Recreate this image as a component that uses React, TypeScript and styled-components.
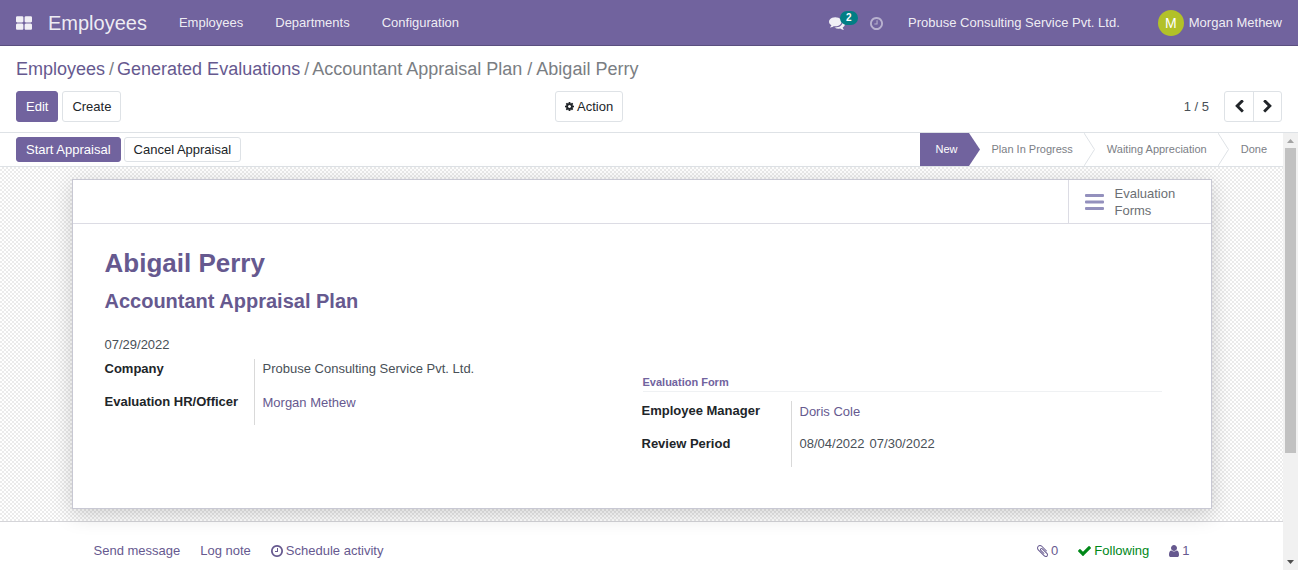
import React from "react";
import styled, { createGlobalStyle } from "styled-components";

const GlobalStyle = createGlobalStyle`
  *, *::before, *::after { box-sizing: border-box; }
  body {
    margin: 0;
    background: #fff;
    color: #495057;
    font-family: "Liberation Sans", Arial, sans-serif;
    font-size: 13px;
    line-height: 20px;
  }
  a { text-decoration: none; }
  h1, h2, h3, p, dl, dd, ol { margin: 0; padding: 0; }
`;

const purple = "#71639e";
const linkColor = "#66598f";
const line = "#dee2e6";

/* Each icon: its view box and its outline. */
const icons = {
  grid: [
    "64 128 1664 1408",
    "M832 1024v384q0 52-38 90t-90 38h-512q-52 0-90-38t-38-90v-384q0-52 38-90t90-38h512q52 0 90 38t38 90zm0-768v384q0 52-38 90t-90 38h-512q-52 0-90-38t-38-90v-384q0-52 38-90t90-38h512q52 0 90 38t38 90zm896 768v384q0 52-38 90t-90 38h-512q-52 0-90-38t-38-90v-384q0-52 38-90t90-38h512q52 0 90 38t38 90zm0-768v384q0 52-38 90t-90 38h-512q-52 0-90-38t-38-90v-384q0-52 38-90t90-38h512q52 0 90 38t38 90z",
  ],
  comments: [
    "0 256 1792 1408",
    "M1408 768q0 139-94 257t-256.500 186.500-353.500 68.500q-86 0-176-16-124 88-278 128-36 9-86 16h-3q-11 0-20.500-8t-11.500-21q-1-3-1-6.500t.5-6.500 2-6l2.500-5 3.500-5.500 4-5 4.500-5 4-4.500q5-6 23-25t26-29.500 22.500-29 25-38.500 20.500-44q-124-72-195-177t-71-224q0-139 94-257t256.500-186.500 353.500-68.500 353.500 68.500 256.500 186.500 94 257zm384 256q0 120-71 224.500t-195 176.500q10 24 20.500 44t25 38.500 22.500 29 26 29.500 23 25q1 1 4 4.500t4.500 5 4 5 3.500 5.500l2.500 5 2 6 .5 6.500-1 6.500q-3 14-13 22t-22 7q-50-7-86-16-154-40-278-128-90 16-176 16-271 0-472-132 58 4 88 4 161 0 309-45t264-129q125-92 192-212t67-254q0-77-23-152 129 71 204 178t75 230z",
  ],
  clock: [
    "128 128 1536 1536",
    "M1024 544v448q0 14-9 23t-23 9h-320q-14 0-23-9t-9-23v-64q0-14 9-23t23-9h224v-352q0-14 9-23t23-9h64q14 0 23 9t9 23zm416 352q0-148-73-273t-198-198-273-73-273 73-198 198-73 273 73 273 198 198 273 73 273-73 198-198 73-273zm224 0q0 209-103 385.500t-279.500 279.500-385.500 103-385.500-103-279.500-279.500-103-385.500 103-385.500 279.500-279.500 385.500-103 385.500 103 279.500 279.500 103 385.500z",
  ],
  cog: [
    "128 128 1536 1536",
    "M1152 896q0-106-75-181t-181-75-181 75-75 181 75 181 181 75 181-75 75-181zm512-109v222q0 12-8 23t-20 13l-185 28q-19 54-39 91 35 50 107 138 10 12 10 25t-9 23q-27 37-99 108t-94 71q-12 0-26-9l-138-108q-44 23-91 38-16 136-29 186-7 28-36 28h-222q-14 0-24.500-8.500t-11.500-21.500l-28-184q-49-16-90-37l-141 107q-10 9-25 9-14 0-25-11-126-114-165-168-7-10-7-23 0-12 8-23 15-21 51-66.500t54-70.500q-27-50-41-99l-183-27q-13-2-21-12.500t-8-23.500v-222q0-12 8-23t19-13l186-28q14-46 39-92-40-57-107-138-10-12-10-24 0-10 9-23 26-36 98.500-107.500t94.500-71.500q13 0 26 10l138 107q44-23 91-38 16-136 29-186 7-28 36-28h222q14 0 24.500 8.500t11.500 21.500l28 184q49 16 90 37l142-107q9-9 24-9 13 0 25 10 129 119 165 170 7 8 7 22 0 12-8 23-15 21-51 66.500t-54 70.500q26 50 41 98l183 28q13 2 21 12.500t8 23.500z",
  ],
  left: [
    "410 90 1036 1612",
    "M1427 301l-531 531 531 531q19 19 19 45t-19 45l-166 166q-19 19-45 19t-45-19l-742-742q-19-19-19-45t19-45l742-742q19-19 45-19t45 19l166 166q19 19 19 45t-19 45z",
  ],
  right: [
    "346 90 1036 1612",
    "M1363 877l-742 742q-19 19-45 19t-45-19l-166-166q-19-19-19-45t19-45l531-531-531-531q-19-19-19-45t19-45l166-166q19-19 45-19t45 19l742 742q19 19 19 45t-19 45z",
  ],
  bars: [
    "0 0 19 16",
    "M1 0H18a1 1 0 0 1 1 1V2a1 1 0 0 1-1 1H1a1 1 0 0 1-1-1V1a1 1 0 0 1 1-1zM1 6.500H18a1 1 0 0 1 1 1v1a1 1 0 0 1-1 1H1a1 1 0 0 1-1-1v-1a1 1 0 0 1 1-1zM1 13H18a1 1 0 0 1 1 1v1a1 1 0 0 1-1 1H1a1 1 0 0 1-1-1v-1a1 1 0 0 1 1-1z",
  ],
  check: [
    "121 334 1550 1188",
    "M1671 566q0 40-28 68l-724 724-136 136q-28 28-68 28t-68-28l-136-136-362-362q-28-28-28-68t28-68l136-136q28-28 68-28t68 28l294 295 656-657q28-28 68-28t68 28l136 136q28 28 28 68z",
  ],
  user: [
    "256 128 1280 1536",
    "M1536 1399q0 109-62.500 187t-150.500 78h-854q-88 0-150.500-78t-62.500-187q0-85 8.500-160.500t31.500-152 58.500-131 94-89 134.500-34.500q131 128 313 128t313-128q76 0 134.500 34.500t94 89 58.500 131 31.500 152 8.500 160.500zm-256-887q0 159-112.500 271.500t-271.500 112.500-271.500-112.500-112.500-271.500 112.500-271.500 271.500-112.500 271.500 112.500 112.500 271.500z",
  ],
  clip: [
    "192 128 1404 1532",
    "M1596 1385q0 117-79 196t-196 79q-135 0-235-100l-777-776q-113-115-113-271 0-159 110-270t269-111q158 0 273 113l605 606q10 10 10 22 0 16-30.500 46.500t-46.500 30.500q-13 0-23-10l-606-607q-79-77-181-77-106 0-179 75t-73 181q0 105 76 181l776 777q63 63 145 63 64 0 106-42t42-106q0-82-63-145l-581-581q-26-24-60-24-29 0-48 19t-19 48q0 32 25 59l410 410q10 10 10 22 0 16-31 47t-47 31q-12 0-22-10l-410-410q-63-61-63-149 0-82 57-139t139-57q88 0 149 63l581 581q100 98 100 235z",
  ],
};

const IconSvg = styled.svg<{ $width: number; $height: number }>`
  display: block;
  flex: none;
  width: ${(p) => p.$width}px;
  height: ${(p) => p.$height}px;
  fill: currentColor;
`;

interface IconProps {
  name: keyof typeof icons;
  width: number;
  height: number;
}

function Icon({ name, width, height }: IconProps) {
  const [viewBox, path] = icons[name];
  return (
    <IconSvg $width={width} $height={height} viewBox={viewBox} aria-hidden="true">
      <path d={path} />
    </IconSvg>
  );
}

const Page = styled.div`
  display: flex;
  flex-direction: column;
  height: 100vh;
  overflow: hidden;
`;

/* Top navigation */

const NavBar = styled.header`
  display: flex;
  align-items: center;
  flex: none;
  height: 46px;
  padding: 0 16px;
  background: ${purple};
  border-bottom: 1px solid #5a4f7f;
  color: rgba(255, 255, 255, 0.9);
`;

const NavButton = styled.button<{ $dim?: boolean }>`
  position: relative;
  display: flex;
  padding: 1px 0 0;
  border: 0;
  background: none;
  color: ${(p) => (p.$dim ? "rgba(255, 255, 255, 0.5)" : "rgba(255, 255, 255, 0.9)")};
`;

const Brand = styled.a`
  margin: 0 32px 0 16px;
  color: inherit;
  font-size: 20px;
`;

const Menu = styled.nav`
  display: flex;
  flex: 1;
  gap: 32px;
`;

const MenuLink = styled.a`
  color: inherit;
`;

const Tray = styled.div`
  display: flex;
  align-items: center;
`;

const TrayIcons = styled.div`
  display: flex;
  align-items: center;
  gap: 25px;
  margin-right: 25px;
`;

const Badge = styled.span`
  position: absolute;
  left: 11px;
  top: -5px;
  padding: 0 6px;
  border-radius: 8px;
  background: #017e84;
  color: #fff;
  font: bold 10px/14px "Liberation Sans", Arial, sans-serif;
`;

const UserLink = styled.a`
  display: flex;
  align-items: center;
  gap: 5px;
  margin-left: 38px;
  color: inherit;
`;

const Avatar = styled.span`
  width: 26px;
  height: 26px;
  border-radius: 50%;
  background: #b2c128;
  color: #fff;
  font-size: 14px;
  line-height: 26px;
  text-align: center;
`;

/* Control panel */

const ControlPanel = styled.section`
  flex: none;
  padding: 10px 16px;
  border-bottom: 1px solid ${line};
`;

const Breadcrumb = styled.nav`
  display: flex;
  color: #7a7e83;
  font-size: 18px;
  line-height: 26px;
`;

const Crumb = styled.a`
  color: ${linkColor};
`;

const Slash = styled.span`
  margin: 0 3px 0 4px;
`;

const PanelRow = styled.div`
  display: grid;
  grid-template-columns: 9fr auto 11fr;
  align-items: center;
  margin-top: 9px;
`;

const ButtonGroup = styled.div<{ $gap: number }>`
  display: flex;
  gap: ${(p) => p.$gap}px;
`;

const Button = styled.button<{ $primary?: boolean; $small?: boolean }>`
  display: flex;
  align-items: center;
  gap: 3px;
  height: ${(p) => (p.$small ? 25 : 31)}px;
  padding: 0 9px;
  border: 1px solid ${(p) => (p.$primary ? purple : line)};
  border-radius: 3px;
  background: ${(p) => (p.$primary ? purple : "#fff")};
  color: ${(p) => (p.$primary ? "#fff" : "#212529")};
  font: 13px/20px "Liberation Sans", Arial, sans-serif;
`;

const Pager = styled.div`
  display: flex;
  align-items: center;
  justify-content: flex-end;
  gap: 15px;
`;

const PagerButtons = styled.div`
  display: flex;
  border: 1px solid ${line};
  border-radius: 3px;
`;

const PagerButton = styled.button`
  display: flex;
  align-items: center;
  justify-content: center;
  width: 28px;
  height: 29px;
  padding: 0;
  border: 0;
  background: none;
  color: #212529;

  & + & {
    border-left: 1px solid ${line};
  }
`;

/* Scrolling content */

const Content = styled.div`
  display: flex;
  flex: 1;
  min-height: 0;
`;

const Main = styled.main`
  flex: 1;
  min-width: 0;
  overflow: hidden;
`;

const ScrollTrack = styled.div`
  display: flex;
  flex: none;
  flex-direction: column;
  align-items: center;
  width: 15px;
  background: #f1f1f1;
`;

const ScrollArrow = styled.svg`
  display: block;
  flex: none;
  width: 15px;
  height: 15px;
`;

const ScrollRoom = styled.div`
  flex: 1;
  width: 11px;
`;

const ScrollThumb = styled.div`
  height: 75%;
  background: #c1c1c1;
`;

const StatusBar = styled.div`
  display: flex;
  align-items: center;
  justify-content: space-between;
  height: 34px;
  padding-left: 16px;
  border-bottom: 1px solid ${line};
`;

const Steps = styled.ol`
  display: flex;
  height: 33px;
  list-style: none;
`;

const Step = styled.li<{ $active?: boolean }>`
  display: flex;
  align-items: center;
  padding-left: ${(p) => (p.$active ? 15 : 12)}px;
  background: ${(p) => (p.$active ? purple : "transparent")};
  color: ${(p) => (p.$active ? "#fff" : "#7c8086")};
  font-size: 11px;

  &:last-child {
    padding-right: 16px;
  }
`;

const StepLabel = styled.span`
  padding-bottom: 2px;
`;

const StepArrow = styled.svg<{ $active?: boolean }>`
  display: block;
  width: 11px;
  height: 33px;
  margin-left: 11px;
  background: #fff;
  fill: ${(p) => (p.$active ? purple : "none")};
  stroke: ${(p) => (p.$active ? "none" : line)};
`;

const SheetArea = styled.div`
  padding: 12px 16px;
  border-bottom: 1px solid #d5d5d9;
  background: repeating-conic-gradient(#ebebeb 0 25%, #fff 0 50%) 0 0 / 4px 4px;
`;

const Sheet = styled.article`
  max-width: 1140px;
  min-height: 330px;
  margin: 0 auto;
  border: 1px solid #c8c8d3;
  background: #fff;
  box-shadow: 0 5px 20px rgba(0, 0, 0, 0.18);
`;

const StatRow = styled.div`
  display: flex;
  justify-content: flex-end;
  border-bottom: 1px solid #dcdce4;
`;

const StatButton = styled.button`
  display: flex;
  align-items: center;
  gap: 11px;
  width: 143px;
  height: 43px;
  padding: 0 16px;
  border: 0;
  border-left: 1px solid #dcdce4;
  background: none;
  color: #6c6f74;
  font: 13px/17px "Liberation Sans", Arial, sans-serif;
  text-align: left;
`;

const StatIcon = styled.span`
  color: #9390bd;
`;

const SheetBody = styled.div`
  padding: 24px 32px;
`;

const Title = styled.h1`
  color: ${linkColor};
  font-size: 26px;
  line-height: 30px;
`;

const Subtitle = styled.h2`
  margin-top: 11px;
  color: ${linkColor};
  font-size: 20px;
  line-height: 24px;
`;

const DateText = styled.p`
  margin-top: 22px;
`;

const Columns = styled.div`
  display: grid;
  grid-template-columns: 1fr 1fr;
  margin-top: 4px;
`;

const Column = styled.section`
  padding-right: 16px;
`;

const GroupTitle = styled.h3`
  margin: 15px 1px 9px;
  border-bottom: 1px solid #eff1f3;
  color: ${purple};
  font-size: 11px;
  line-height: 17px;
`;

const Fields = styled.dl`
  display: grid;
  grid-template-columns: 150px 1fr;
`;

const FieldName = styled.dt`
  height: 33px;
  border-right: 1px solid #d9d9d9;
  color: #212529;
  font-weight: bold;
`;

const FieldValue = styled.dd`
  display: flex;
  gap: 5px;
  height: 33px;
  padding-left: 8px;
`;

const RecordLink = styled.a`
  padding-top: 1px;
  color: ${linkColor};
`;

/* Chatter */

const Chatter = styled.footer`
  display: flex;
  justify-content: space-between;
  max-width: 1096px;
  margin: 0 auto;
  padding: 19px 0;
`;

const ChatterGroup = styled.div`
  display: flex;
  gap: 20px;
`;

const ChatterButton = styled.button<{ $green?: boolean }>`
  display: flex;
  align-items: center;
  gap: 3px;
  padding: 0;
  border: 0;
  background: none;
  color: ${(p) => (p.$green ? "#008818" : linkColor)};
  font: 13px/20px "Liberation Sans", Arial, sans-serif;
`;

const steps = ["New", "Plan In Progress", "Waiting Appreciation", "Done"];

export default function App() {
  return (
    <Page>
      <GlobalStyle />
      <NavBar>
        <NavButton aria-label="Apps">
          <Icon name="grid" width={16} height={14} />
        </NavButton>
        <Brand href="#">Employees</Brand>
        <Menu>
          <MenuLink href="#">Employees</MenuLink>
          <MenuLink href="#">Departments</MenuLink>
          <MenuLink href="#">Configuration</MenuLink>
        </Menu>
        <Tray>
          <TrayIcons>
            <NavButton aria-label="Messages">
              <Icon name="comments" width={16} height={13} />
              <Badge>2</Badge>
            </NavButton>
            <NavButton $dim aria-label="Activities">
              <Icon name="clock" width={13} height={13} />
            </NavButton>
          </TrayIcons>
          <MenuLink href="#">Probuse Consulting Service Pvt. Ltd.</MenuLink>
          <UserLink href="#">
            <Avatar>M</Avatar>
            Morgan Methew
          </UserLink>
        </Tray>
      </NavBar>

      <ControlPanel>
        <Breadcrumb>
          <Crumb href="#">Employees</Crumb>
          <Slash>/</Slash>
          <Crumb href="#">Generated Evaluations</Crumb>
          <Slash>/</Slash>
          <span>Accountant Appraisal Plan / Abigail Perry</span>
        </Breadcrumb>
        <PanelRow>
          <ButtonGroup $gap={4}>
            <Button $primary>Edit</Button>
            <Button>Create</Button>
          </ButtonGroup>
          <Button>
            <Icon name="cog" width={9} height={9} />
            Action
          </Button>
          <Pager>
            <span>1 / 5</span>
            <PagerButtons>
              <PagerButton aria-label="Previous">
                <Icon name="left" width={9} height={13} />
              </PagerButton>
              <PagerButton aria-label="Next">
                <Icon name="right" width={9} height={13} />
              </PagerButton>
            </PagerButtons>
          </Pager>
        </PanelRow>
      </ControlPanel>

      <Content>
        <Main>
          <StatusBar>
            <ButtonGroup $gap={3}>
              <Button $primary $small>
                Start Appraisal
              </Button>
              <Button $small>Cancel Appraisal</Button>
            </ButtonGroup>
            <Steps>
              {steps.map((step, i) => (
                <Step key={step} $active={i === 0}>
                  <StepLabel>{step}</StepLabel>
                  {i < steps.length - 1 && (
                    <StepArrow $active={i === 0} viewBox="0 0 11 33" aria-hidden="true">
                      <path d={i === 0 ? "M0 0L11 16.500L0 33Z" : "M0 0L10.500 16.500L0 33"} />
                    </StepArrow>
                  )}
                </Step>
              ))}
            </Steps>
          </StatusBar>

          <SheetArea>
            <Sheet>
              <StatRow>
                <StatButton>
                  <StatIcon>
                    <Icon name="bars" width={19} height={16} />
                  </StatIcon>
                  <span>
                    Evaluation
                    <br />
                    Forms
                  </span>
                </StatButton>
              </StatRow>
              <SheetBody>
                <Title>Abigail Perry</Title>
                <Subtitle>Accountant Appraisal Plan</Subtitle>
                <DateText>07/29/2022</DateText>
                <Columns>
                  <Column>
                    <Fields>
                      <FieldName>Company</FieldName>
                      <FieldValue>Probuse Consulting Service Pvt. Ltd.</FieldValue>
                      <FieldName>Evaluation HR/Officer</FieldName>
                      <FieldValue>
                        <RecordLink href="#">Morgan Methew</RecordLink>
                      </FieldValue>
                    </Fields>
                  </Column>
                  <Column>
                    <GroupTitle>Evaluation Form</GroupTitle>
                    <Fields>
                      <FieldName>Employee Manager</FieldName>
                      <FieldValue>
                        <RecordLink href="#">Doris Cole</RecordLink>
                      </FieldValue>
                      <FieldName>Review Period</FieldName>
                      <FieldValue>
                        <span>08/04/2022</span>
                        <span>07/30/2022</span>
                      </FieldValue>
                    </Fields>
                  </Column>
                </Columns>
              </SheetBody>
            </Sheet>
          </SheetArea>

          <Chatter>
            <ChatterGroup>
              <ChatterButton>Send message</ChatterButton>
              <ChatterButton>Log note</ChatterButton>
              <ChatterButton>
                <Icon name="clock" width={12} height={12} />
                Schedule activity
              </ChatterButton>
            </ChatterGroup>
            <ChatterGroup>
              <ChatterButton>
                <Icon name="clip" width={11} height={12} />0
              </ChatterButton>
              <ChatterButton $green>
                <Icon name="check" width={13} height={10} />
                Following
              </ChatterButton>
              <ChatterButton>
                <Icon name="user" width={10} height={12} />1
              </ChatterButton>
            </ChatterGroup>
          </Chatter>
        </Main>
        <ScrollTrack aria-hidden="true">
          <ScrollArrow viewBox="0 0 15 15">
            <path d="M4 10L7.500 6L11 10Z" fill="#a3a3a3" />
          </ScrollArrow>
          <ScrollRoom>
            <ScrollThumb />
          </ScrollRoom>
          <ScrollArrow viewBox="0 0 15 15">
            <path d="M4 5L7.500 9L11 5Z" fill="#505050" />
          </ScrollArrow>
        </ScrollTrack>
      </Content>
    </Page>
  );
}
